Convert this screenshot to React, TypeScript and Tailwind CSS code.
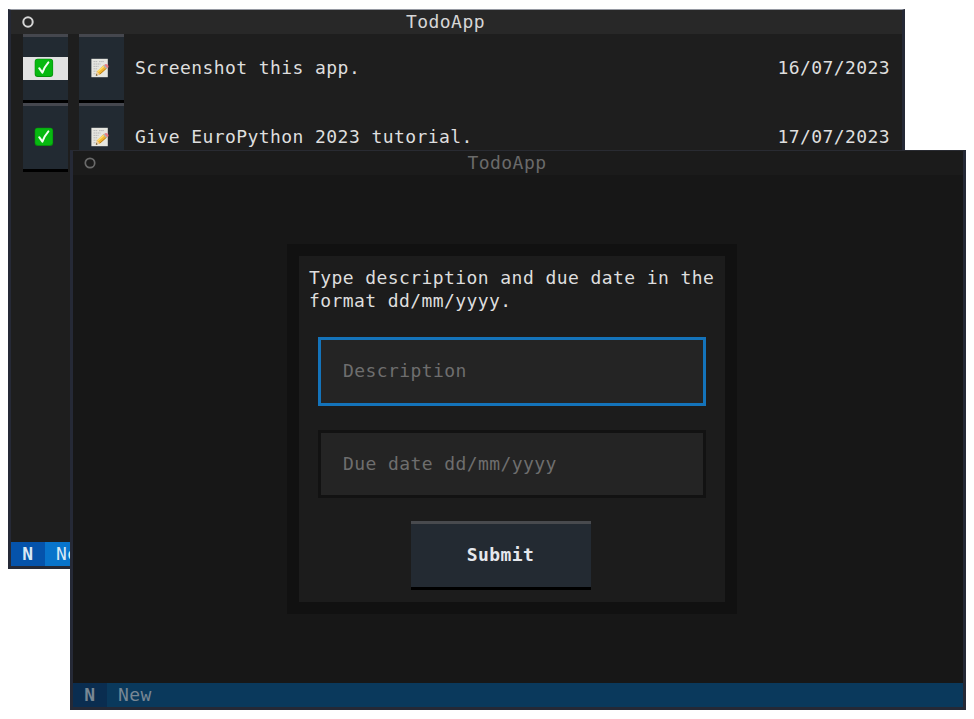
import React from "react";

function CheckIcon() {
  return (
    <svg width="20" height="20" viewBox="0 0 20 20" className="block">
      <rect x="0.7" y="0.7" width="18.4" height="18.4" rx="3" fill="#078f0c" />
      <rect x="1.3" y="1.2" width="17.2" height="16.8" rx="2.4" fill="#07b911" />
      <path d="M5.2 10.2 8.4 14.6Q10.4 9 14.4 4.4" fill="none" stroke="#f4fff4" strokeWidth="2" strokeLinecap="round" strokeLinejoin="round" />
    </svg>
  );
}

function MemoIcon() {
  return (
    <svg width="20" height="20" viewBox="0 0 20 20" className="block">
      <rect x="1.4" y="0.8" width="16.4" height="18.4" fill="#e6e6e0" />
      <path d="M3.5 3.6h4M9 3.6h5M3.5 6h7M3.5 8.4h5M3.5 10.8h4M3.5 13.2h3M3.5 15.8h3" stroke="#b2b2b2" strokeWidth="0.9" strokeDasharray="1.6 0.5" />
      <path d="M5.8 17.8 7.2 13.3 14 6.8 17.3 10.1 10 16.6Z" fill="#f0b52e" />
      <path d="M7.8 13.8 14.8 7.5" stroke="#ffdc69" strokeWidth="1.5" />
      <path d="M9.6 16.3 16.7 10" stroke="#b97918" strokeWidth="0.9" />
      <path d="M14.2 7 15.6 5.9Q18.9 6.3 18.5 9.2L17.1 10.3Z" fill="#e87c86" />
      <path d="M13.2 7.8 14.2 6.8 17.2 10.1 16.2 11.1Z" fill="#a9b2ba" />
      <path d="M5.8 17.8 7.2 13.6 9.8 16.4Z" fill="#edcda0" />
      <path d="M5.8 17.8 6.4 16 7.6 17.2Z" fill="#343434" />
    </svg>
  );
}

function Header({ dim = false }: { dim?: boolean }) {
  return (
    <div className={`relative flex h-6 shrink-0 items-center justify-center ${dim ? "bg-[#1b1b1b] text-[#6a6a6a]" : "bg-[#282828] text-[#d6d6d6]"}`}>
      <svg className="absolute left-[10px] top-[5px]" width="14" height="14" viewBox="0 0 14 14">
        <circle cx="7" cy="7" r="4.7" fill="none" stroke="currentColor" strokeWidth={dim ? 1.7 : 2} />
      </svg>
      <span className="-ml-[22px] pb-[2px]">TodoApp</span>
    </div>
  );
}

function IconButton({ children, focused = false }: { children: React.ReactNode; focused?: boolean }) {
  return (
    <button className="flex h-[69px] w-[45px] items-center border-t-[3px] border-b-[3px] border-t-[#45474e] border-b-black bg-[#222a32]">
      <span className={`flex h-[23px] w-full items-center pb-[2px] pl-[11px] ${focused ? "bg-[#e2e2e2]" : ""}`}>{children}</span>
    </button>
  );
}

function TodoRow({ text, date, focused = false }: { text: string; date: string; focused?: boolean }) {
  return (
    <div className="flex h-[69px] items-center pl-[11.5px] pr-[12px]">
      <IconButton focused={focused}><CheckIcon /></IconButton>
      <div className="ml-[11.5px]"><IconButton><MemoIcon /></IconButton></div>
      <span className="ml-[11px] flex-1 whitespace-pre pb-[2px]">{text}</span>
      <span className="pb-[2px]">{date}</span>
    </div>
  );
}

function Footer({ dim = false }: { dim?: boolean }) {
  return (
    <div className={`flex h-6 shrink-0 items-center ${dim ? "bg-[#0a395c] text-[#788794]" : "bg-[#0874cb] text-[#d9e8f4]"}`}>
      <span className={`flex h-full w-[34px] items-center justify-center pb-[2px] font-bold ${dim ? "bg-[#0a2d50]" : "bg-[#0553ab]"}`}>N</span>
      <span className="ml-[11px] pb-[2px]">New</span>
    </div>
  );
}

export default function App() {
  return (
    <div className="relative h-[719px] w-[974px] overflow-hidden bg-white font-['DejaVu_Sans_Mono',monospace] text-[18px] leading-[23px] tracking-[0.42px] text-[#dedede]">
      <section className="absolute left-[8px] top-[9px] flex h-[560px] w-[897px] flex-col border-x-[3px] border-t border-b-[3px] border-x-[#252936] border-b-[#252936] border-t-[#9699a2] bg-[#1e1e1e]">
        <Header />
        <main className="min-h-0 flex-1">
          <TodoRow text="Screenshot this app." date="16/07/2023" focused />
          <TodoRow text="Give EuroPython 2023 tutorial." date="17/07/2023" />
        </main>
        <Footer />
      </section>
      <section className="absolute left-[70px] top-[150px] flex h-[560px] w-[896px] flex-col border-x-[3px] border-t border-b-[3px] border-x-[#252936] border-b-[#252936] border-t-[#292b32] bg-[#171717]">
        <Header dim />
        <main className="flex min-h-0 flex-1 justify-center pt-[69px]">
          <form className="-ml-[12px] flex h-[370px] w-[450px] flex-col items-center border-[12px] border-[#111111] bg-[#1c1c1c] pt-[10px]">
            <p className="w-[406px] whitespace-nowrap">Type description and due date in the<br />format dd/mm/yyyy.</p>
            <div className="mt-[25px] flex h-[69px] w-[388px] items-center border-[3px] border-[#1473ba] bg-[#242424] pb-[2px] pl-[22px] text-[#6e6e6e]">Description</div>
            <div className="mt-[24px] flex h-[68px] w-[388px] items-center border-[3px] border-[#121212] bg-[#242424] pb-[2px] pl-[22px] text-[#6e6e6e]">Due date dd/mm/yyyy</div>
            <button type="button" className="mt-[23px] mr-[23px] h-[69px] w-[180px] border-t-[3px] border-b-[3px] border-t-[#484a4e] border-b-black bg-[#232a32] pb-[2px] font-bold text-[#e5e7ec]">Submit</button>
          </form>
        </main>
        <Footer dim />
      </section>
    </div>
  );
}
